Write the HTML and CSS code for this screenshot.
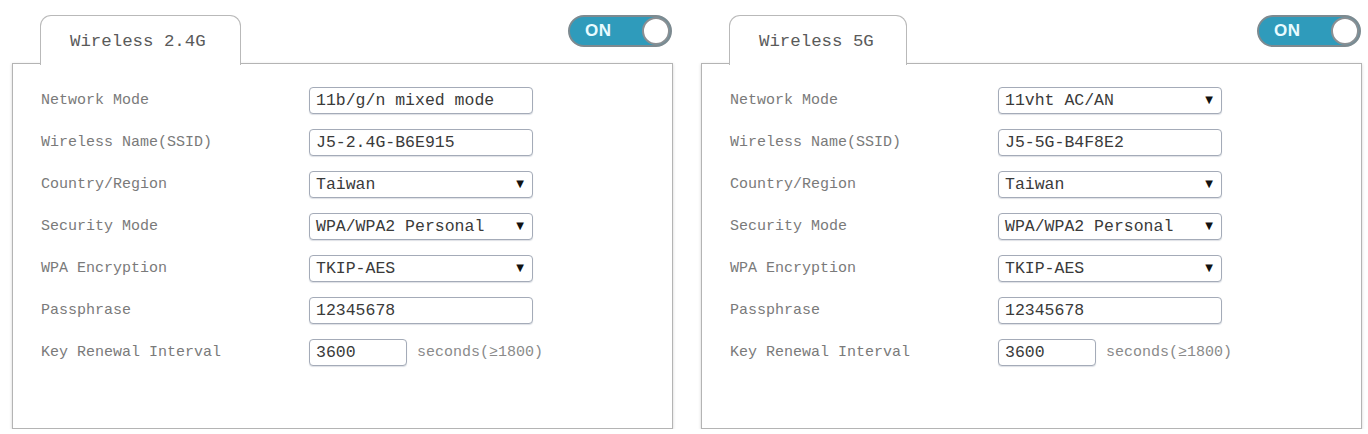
FILE: index.html
```html
<!DOCTYPE html>
<html>
<head>
<meta charset="utf-8">
<link rel="stylesheet" href="styles.css">
</head>
<body>
<div class="page">
  <section class="panel">
    <div class="head">
      <div class="tab tab-24">Wireless 2.4G</div>
      <div class="toggle"><span class="on">ON</span><span class="knob"></span></div>
    </div>
    <div class="box">
      <div class="form">
        <div class="label">Network Mode</div>
        <div class="field">11b/g/n mixed mode</div>
        <div class="label">Wireless Name(SSID)</div>
        <div class="field">J5-2.4G-B6E915</div>
        <div class="label">Country/Region</div>
        <div class="field select">Taiwan<span class="arrow">▼</span></div>
        <div class="label">Security Mode</div>
        <div class="field select">WPA/WPA2 Personal<span class="arrow">▼</span></div>
        <div class="label">WPA Encryption</div>
        <div class="field select">TKIP-AES<span class="arrow">▼</span></div>
        <div class="label">Passphrase</div>
        <div class="field">12345678</div>
        <div class="label">Key Renewal Interval</div>
        <div class="inline"><div class="field short">3600</div><span class="unit">seconds(≥1800)</span></div>
      </div>
    </div>
  </section>
  <section class="panel">
    <div class="head">
      <div class="tab tab-5">Wireless 5G</div>
      <div class="toggle"><span class="on">ON</span><span class="knob"></span></div>
    </div>
    <div class="box">
      <div class="form">
        <div class="label">Network Mode</div>
        <div class="field select">11vht AC/AN<span class="arrow">▼</span></div>
        <div class="label">Wireless Name(SSID)</div>
        <div class="field">J5-5G-B4F8E2</div>
        <div class="label">Country/Region</div>
        <div class="field select">Taiwan<span class="arrow">▼</span></div>
        <div class="label">Security Mode</div>
        <div class="field select">WPA/WPA2 Personal<span class="arrow">▼</span></div>
        <div class="label">WPA Encryption</div>
        <div class="field select">TKIP-AES<span class="arrow">▼</span></div>
        <div class="label">Passphrase</div>
        <div class="field">12345678</div>
        <div class="label">Key Renewal Interval</div>
        <div class="inline"><div class="field short">3600</div><span class="unit">seconds(≥1800)</span></div>
      </div>
    </div>
  </section>
</div>
</body>
</html>
```
FILE: styles.css
```css
html, body {
  margin: 0;
  padding: 0;
  background: #ffffff;
}
body {
  font-family: "Liberation Mono", "DejaVu Sans Mono", monospace;
}
.page {
  display: flex;
  gap: 28px;
  padding: 0 6px 0 12px;
}
.panel {
  width: 661px;
  display: flex;
  flex-direction: column;
}
.head {
  height: 64px;
  display: flex;
  justify-content: space-between;
  align-items: flex-start;
  padding-left: 28px;
  padding-right: 1px;
  box-sizing: border-box;
}
.tab {
  margin-top: 15px;
  height: 50px;
  box-sizing: border-box;
  border: 1px solid #b9b9b9;
  border-bottom: none;
  border-radius: 11px 11px 0 0;
  background: #fff;
  position: relative;
  z-index: 2;
  padding: 15px 0 0 29px;
  font-size: 17.4px;
  line-height: 22px;
  color: #5a5a5a;
}
.tab-24 { width: 201px; }
.tab-5 { width: 178px; }
.toggle {
  margin-top: 15px;
  width: 104px;
  height: 32px;
  box-sizing: border-box;
  border: 2px solid #7d8a90;
  border-radius: 16px;
  background: #2f9bbb;
  display: flex;
  align-items: center;
  justify-content: space-between;
  padding: 0 0 0 15px;
}
.on {
  font-family: "Liberation Sans", Arial, sans-serif;
  font-weight: bold;
  font-size: 17px;
  color: #e9fbff;
  letter-spacing: 0.5px;
}
.knob {
  width: 28px;
  height: 28px;
  box-sizing: border-box;
  border-radius: 50%;
  background: #fff;
  border: 2px solid #8a8f93;
}
.box {
  height: 366px;
  box-sizing: border-box;
  border: 1px solid #b4b4b4;
  box-shadow: 0 1px 3px rgba(0, 0, 0, 0.18);
  background: #fff;
  position: relative;
  z-index: 1;
  margin-top: -1px;
}
.form {
  display: grid;
  grid-template-columns: 268px 224px;
  row-gap: 15px;
  align-items: center;
  padding: 23px 0 0 28px;
}
.label {
  font-size: 15px;
  color: #7a7a7a;
  line-height: 18px;
}
.field {
  height: 27px;
  box-sizing: border-box;
  border: 1px solid #a4abb8;
  border-radius: 4px;
  box-shadow: 0 1px 1px rgba(120, 130, 150, 0.25);
  background: #fff;
  font-size: 16.5px;
  color: #3a3a3a;
  line-height: 25px;
  padding: 0 8px 0 6px;
  display: flex;
  justify-content: space-between;
  white-space: nowrap;
}
.arrow {
  font-family: "DejaVu Sans", sans-serif;
  font-size: 10px;
  color: #111;
  line-height: 23px;
}
.inline {
  display: flex;
  align-items: center;
  gap: 10px;
  white-space: nowrap;
}
.short {
  width: 98px;
  flex-shrink: 0;
}
.unit {
  font-size: 15px;
  color: #8a8a8a;
  flex-shrink: 0;
}
```
